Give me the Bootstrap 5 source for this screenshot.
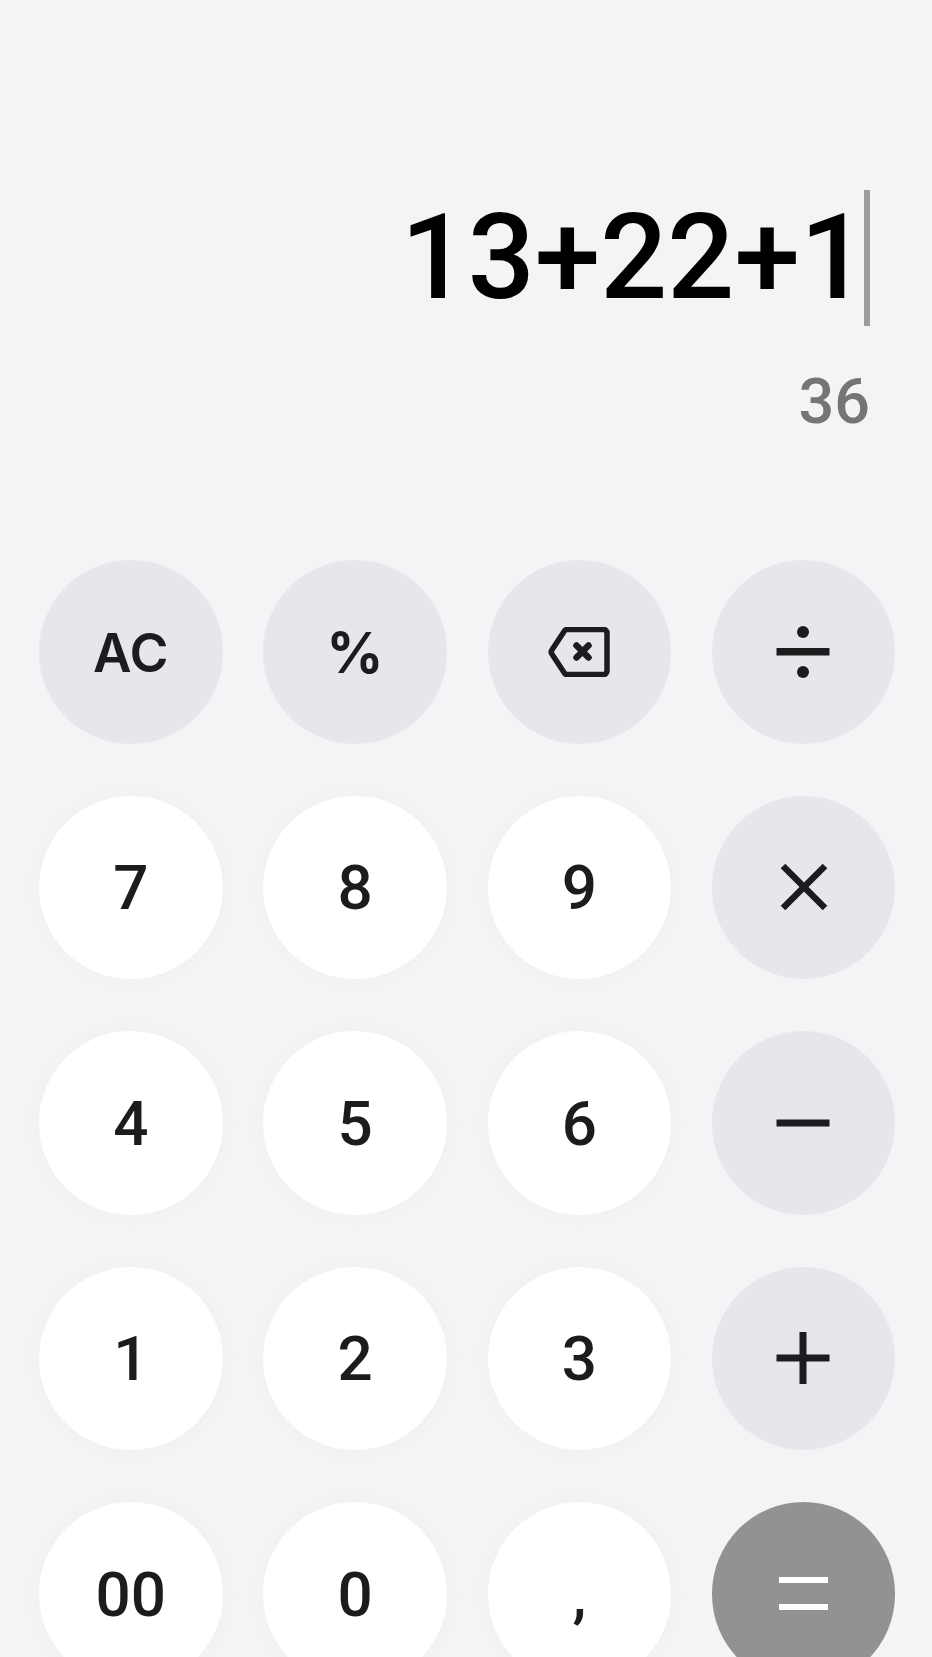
<!DOCTYPE html>
<html lang="en">
<head>
<meta charset="utf-8">
<title>Calculator</title>
<link href="https://cdn.jsdelivr.net/npm/bootstrap@5.3.0/dist/css/bootstrap.min.css" rel="stylesheet">
<style>
html,body{height:1657px;overflow:hidden;background:#f4f4f6;font-family:Roboto,"Liberation Sans",sans-serif}
.calc-screen{height:560px;padding:190px 62px 0 0}
.calc-expr-row{height:136px;align-items:center}
.calc-expr{font-size:118px;font-weight:500;line-height:146px;color:#000;margin-right:-3px}
.calc-caret{width:6px;height:136px;background:#9c9c9c}
.calc-result{font-size:63px;font-weight:500;line-height:75px;color:#757575;margin-top:38px;text-align:right}
.calc-pad{display:grid;grid-template-columns:repeat(4,183.5px);column-gap:40.8px;row-gap:52px;padding-left:39px}
.calc-key{width:183.5px;height:183.5px;padding:2px 0 0;border:0;font-size:62px;font-weight:500;line-height:1;color:#1c1c1e;display:flex;align-items:center;justify-content:center}
.calc-key:hover,.calc-key:active{color:#1c1c1e}
.calc-label{font-family:Inter,Roboto,sans-serif;font-size:53px;font-weight:600;padding-top:4px}
.calc-pct{font-family:Inter,Roboto,sans-serif;font-size:56px;font-weight:700;padding-top:2px}
.calc-light{background:#fff;box-shadow:0 0 28px rgba(0,0,0,.018)}
.calc-light:hover{background:#fff}
.calc-soft{background:#e6e7ea}
.calc-soft:hover{background:#e6e7ea}
.calc-eq{background:#929292}
.calc-eq:hover{background:#929292}
.calc-key svg{display:block;margin:-2px 1px 0 0}
.calc-key .calc-times{margin-right:-1px}
</style>
</head>
<body>
<main>
<section class="calc-screen">
  <div class="d-flex justify-content-end calc-expr-row">
    <span class="calc-expr">13+22+1</span><span class="calc-caret"></span>
  </div>
  <div class="calc-result">36</div>
</section>
<section class="calc-pad">
  <button class="btn rounded-circle calc-key calc-soft calc-label">AC</button>
  <button class="btn rounded-circle calc-key calc-soft calc-pct">%</button>
  <button class="btn rounded-circle calc-key calc-soft" aria-label="Backspace">
    <svg width="62" height="50" viewBox="0 0 62 50" fill="none" stroke="#1c1c1e" stroke-width="5.500" stroke-linejoin="round" stroke-linecap="round"><path d="M19 2.500H55.500a3.500 3.500 0 0 1 3.500 3.500V44a3.500 3.500 0 0 1-3.500 3.500H19a3 3 0 0 1-2.300-1.100L4.200 27.500a4 4 0 0 1 0-5L16.700 3.600A3 3 0 0 1 19 2.500Z"/><path d="M28.500 18.500l12 12M40.500 18.500l-12 12" stroke-width="6.500"/></svg>
  </button>
  <button class="btn rounded-circle calc-key calc-soft" aria-label="Divide">
    <svg width="54" height="54" viewBox="0 0 54 54" fill="#1c1c1e"><rect x="0.500" y="23" width="53" height="7.500"/><circle cx="27" cy="7" r="6"/><circle cx="27" cy="47" r="6"/></svg>
  </button>

  <button class="btn rounded-circle calc-key calc-light">7</button>
  <button class="btn rounded-circle calc-key calc-light">8</button>
  <button class="btn rounded-circle calc-key calc-light">9</button>
  <button class="btn rounded-circle calc-key calc-soft" aria-label="Multiply">
    <svg class="calc-times" width="48" height="48" viewBox="0 0 48 48" fill="none" stroke="#1c1c1e" stroke-width="6.500"><path d="M3 3l42 42M45 3L3 45"/></svg>
  </button>

  <button class="btn rounded-circle calc-key calc-light">4</button>
  <button class="btn rounded-circle calc-key calc-light">5</button>
  <button class="btn rounded-circle calc-key calc-light">6</button>
  <button class="btn rounded-circle calc-key calc-soft" aria-label="Minus">
    <svg width="54" height="8" viewBox="0 0 54 8" fill="#1c1c1e"><rect x="0.500" y="0.500" width="53" height="7"/></svg>
  </button>

  <button class="btn rounded-circle calc-key calc-light">1</button>
  <button class="btn rounded-circle calc-key calc-light">2</button>
  <button class="btn rounded-circle calc-key calc-light">3</button>
  <button class="btn rounded-circle calc-key calc-soft" aria-label="Plus">
    <svg width="54" height="52" viewBox="0 0 54 52" fill="#1c1c1e"><rect x="0.500" y="22.500" width="53" height="7"/><rect x="23.500" y="0" width="7" height="52"/></svg>
  </button>

  <button class="btn rounded-circle calc-key calc-light">00</button>
  <button class="btn rounded-circle calc-key calc-light">0</button>
  <button class="btn rounded-circle calc-key calc-light">,</button>
  <button class="btn rounded-circle calc-key calc-eq" aria-label="Equals">
    <svg width="49" height="33" viewBox="0 0 49 33" fill="#fff"><rect y="0" width="49" height="6"/><rect y="27" width="49" height="6"/></svg>
  </button>
</section>
</main>
<script src="https://cdn.jsdelivr.net/npm/bootstrap@5.3.0/dist/js/bootstrap.bundle.min.js"></script>
</body>
</html>
